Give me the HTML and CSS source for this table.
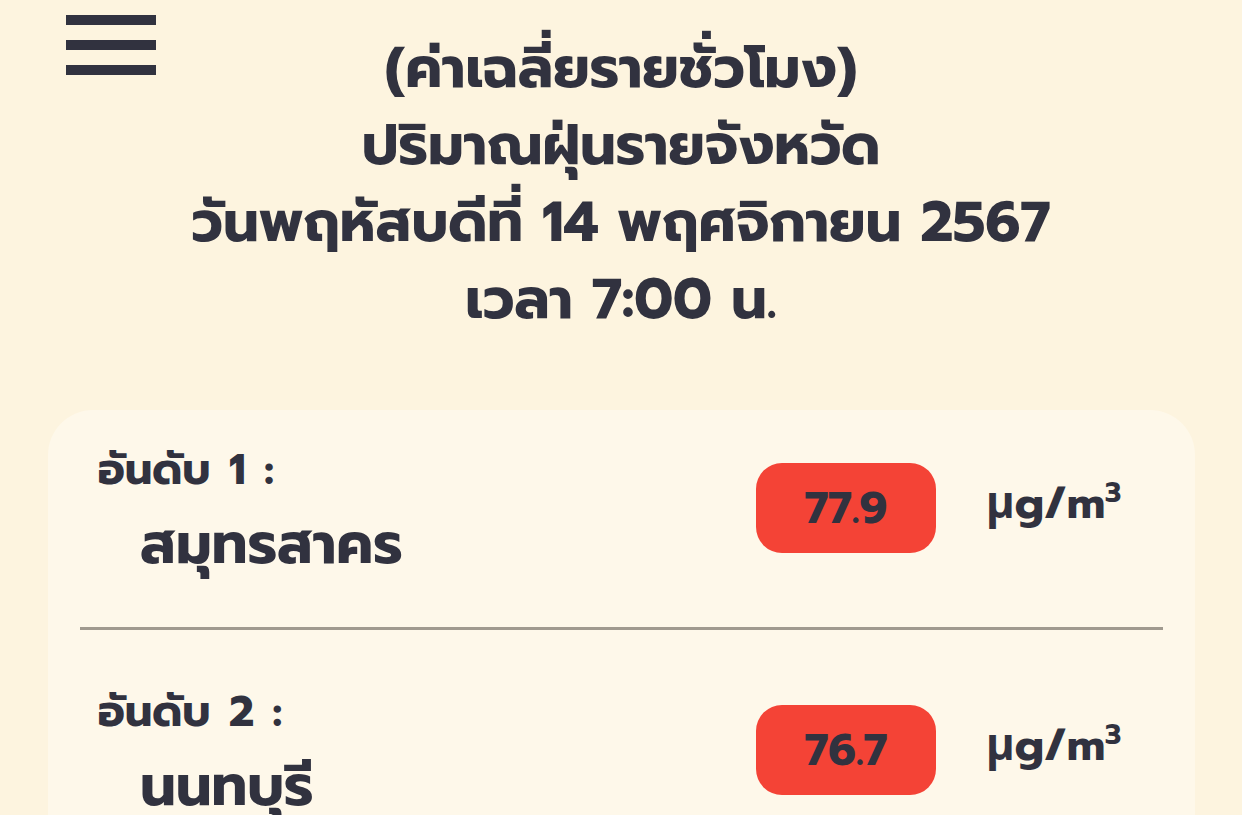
FILE: index.html
```html
<!DOCTYPE html>
<html lang="th">
<head>
<meta charset="utf-8">
<title>ปริมาณฝุ่นรายจังหวัด</title>
<link rel="stylesheet" href="styles.css">
</head>
<body>
<div class="page">
  <header class="top">
    <button class="menu" aria-label="menu">
      <span class="bar"></span><span class="bar"></span><span class="bar"></span>
    </button>
    <h1 class="title">
      <span class="line">(ค่าเฉลี่ยรายชั่วโมง)</span>
      <span class="line">ปริมาณฝุ่นรายจังหวัด</span>
      <span class="line">วันพฤหัสบดีที่ 14 พฤศจิกายน 2567</span>
      <span class="line">เวลา 7:00 น.</span>
    </h1>
  </header>
  <main class="card">
    <section class="row">
      <div class="info">
        <div class="rank">อันดับ 1 :</div>
        <div class="name">สมุทรสาคร</div>
      </div>
      <div class="value">
        <div class="badge">77.9</div>
        <div class="unit">µg/m<sup>3</sup></div>
      </div>
    </section>
    <hr class="divider">
    <section class="row">
      <div class="info">
        <div class="rank">อันดับ 2 :</div>
        <div class="name">นนทบุรี</div>
      </div>
      <div class="value">
        <div class="badge">76.7</div>
        <div class="unit">µg/m<sup>3</sup></div>
      </div>
    </section>
  </main>
</div>
</body>
</html>
```
FILE: styles.css
```css
* { box-sizing: border-box; }
html, body { margin: 0; padding: 0; }
body {
  background: #fdf4df;
  color: #31323f;
  font-family: "Prompt", "Noto Sans", sans-serif;
  overflow: hidden;
  height: 815px;
}
.page { width: 1242px; }
.top {
  position: relative;
  padding-top: 30px;
}
.menu {
  position: absolute;
  left: 66px;
  top: 15px;
  width: 90px;
  height: 60px;
  padding: 0;
  border: 0;
  background: none;
  display: flex;
  flex-direction: column;
  justify-content: space-between;
}
.bar {
  display: block;
  width: 90px;
  height: 10px;
  background: #31323f;
}
.title {
  margin: 0;
  font-size: 56px;
  font-weight: 700;
  line-height: 77px;
  text-align: center;
  display: flex;
  flex-direction: column;
}
.card {
  margin: 72px 0 0 48px;
  width: 1147px;
  background: #fef8ea;
  border-radius: 45px 45px 0 0;
  padding: 0 32px;
  height: 500px;
}
.row {
  display: flex;
  justify-content: space-between;
  align-items: flex-start;
  padding: 40px 44px 0 18px;
}
.rank {
  font-size: 43px;
  font-weight: 700;
  line-height: 40px;
  word-spacing: 4px;
}
.name {
  margin-top: 25px;
  padding-left: 42px;
  font-size: 56px;
  font-weight: 700;
  line-height: 60px;
}
.value {
  margin-top: 13px;
  display: flex;
  align-items: center;
}
.badge {
  width: 180px;
  height: 90px;
  border-radius: 26px;
  background: #f44336;
  display: flex;
  align-items: center;
  justify-content: center;
  font-size: 44px;
  font-weight: 700;
}
.unit {
  margin-left: 50px;
  width: 133px;
  font-size: 44px;
  font-weight: 700;
  line-height: 50px;
  margin-top: -8px;
}
.unit sup { font-size: 28px; line-height: 0; }
.divider {
  margin: 52px 0 22px;
  border: 0;
  height: 3px;
  background: #a09a8f;
}
```
